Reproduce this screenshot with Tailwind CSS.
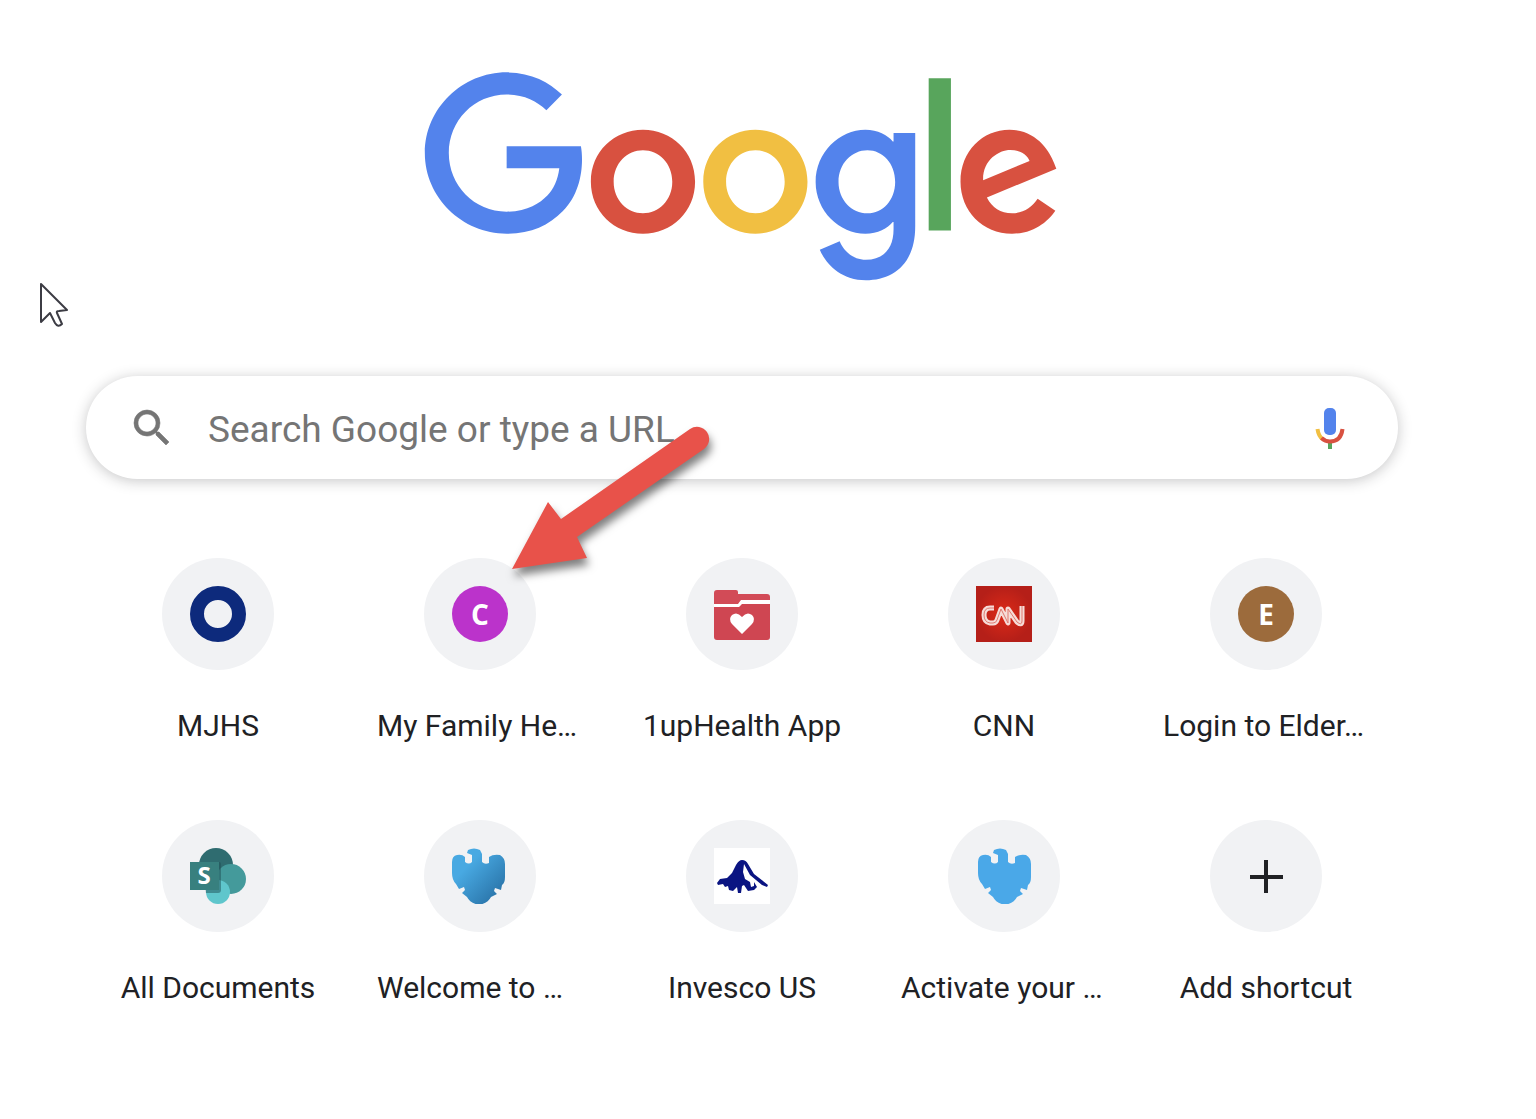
<!DOCTYPE html>
<html lang="en">
<head>
  <meta charset="UTF-8">
  <meta name="viewport" content="width=device-width, initial-scale=1.0">
  <title>New Tab</title>
  <script src="https://cdn.jsdelivr.net/npm/@tailwindcss/browser@4"></script>
</head>
<body class="relative min-h-screen bg-white font-[Roboto,sans-serif] text-[#202124]">

  <!-- Mouse pointer -->
  <svg class="absolute left-[38px] top-[280px] w-8 h-12" viewBox="0 0 32 48" fill="#fff" stroke="#3c3c44" stroke-width="2" stroke-linejoin="round" aria-hidden="true">
    <path d="M3 4v38l9-9 5 10q3 5 7 1l-5-11q-1-2 2-2l8-1z"/>
  </svg>

  <main class="flex flex-col items-center pt-[71px] pb-16 pr-[52px]">

    <h1>
      <svg class="w-[637px] h-[216px]" viewBox="0 0 272 92" role="img" aria-label="Google">
        <path fill="#d85140" d="M115.750 47.180c0 12.770-9.990 22.180-22.250 22.180s-22.250-9.410-22.250-22.180C71.250 34.320 81.240 25 93.500 25s22.250 9.320 22.250 22.180zm-9.740 0c0-7.980-5.790-13.440-12.510-13.440S80.990 39.200 80.990 47.180c0 7.900 5.790 13.440 12.510 13.440s12.510-5.550 12.510-13.440z"/>
        <path fill="#f1bf42" d="M163.750 47.180c0 12.770-9.990 22.180-22.250 22.180s-22.250-9.410-22.250-22.180c0-12.850 9.990-22.180 22.250-22.180s22.250 9.320 22.250 22.180zm-9.740 0c0-7.980-5.790-13.440-12.510-13.440s-12.510 5.460-12.510 13.440c0 7.900 5.790 13.440 12.510 13.440s12.510-5.550 12.510-13.440z"/>
        <path fill="#5383ec" d="M209.750 26.340v39.820c0 16.380-9.660 23.070-21.080 23.070-10.750 0-17.220-7.190-19.660-13.070l8.480-3.530c1.510 3.610 5.210 7.870 11.170 7.870 7.310 0 11.840-4.510 11.840-13v-3.190h-.34c-2.180 2.690-6.380 5.040-11.680 5.040-11.090 0-21.250-9.660-21.250-22.090 0-12.520 10.160-22.260 21.250-22.260 5.290 0 9.490 2.350 11.680 4.960h.34v-3.610h9.250zm-8.560 20.920c0-7.810-5.210-13.520-11.840-13.520-6.720 0-12.350 5.710-12.350 13.520 0 7.730 5.630 13.360 12.350 13.360 6.630 0 11.840-5.630 11.840-13.360z"/>
        <path fill="#58a55c" d="M225 3v65h-9.500V3h9.500z"/>
        <path fill="#d85140" d="M262.020 54.480l7.560 5.040c-2.440 3.610-8.320 9.830-18.480 9.830-12.600 0-22.010-9.740-22.010-22.180 0-13.190 9.490-22.180 20.920-22.180 11.510 0 17.140 9.160 18.980 14.110l1.010 2.520-29.650 12.280c2.270 4.450 5.800 6.720 10.750 6.720 4.960 0 8.400-2.440 10.920-6.140zm-23.270-7.980l19.820-8.230c-1.090-2.770-4.370-4.700-8.230-4.700-4.950 0-11.840 4.370-11.590 12.930z"/>
        <path fill="#5383ec" d="M35.290 41.410V32H67c.31 1.640.47 3.580.47 5.680 0 7.060-1.930 15.790-8.150 22.010-6.050 6.300-13.780 9.660-24.020 9.660C16.320 69.350.36 53.890.36 34.910.36 15.930 16.320.47 35.300.47c10.500 0 17.980 4.120 23.600 9.490l-6.640 6.640c-4.030-3.780-9.490-6.720-16.970-6.720-13.860 0-24.700 11.170-24.700 25.030 0 13.860 10.840 25.030 24.700 25.030 8.990 0 14.110-3.610 17.390-6.890 2.660-2.660 4.410-6.460 5.100-11.650l-22.490.01z"/>
      </svg>
    </h1>

    <!-- Search box -->
    <form class="relative mt-[89px] flex items-center gap-8 w-full max-w-[1312px] h-[103px] pl-[42px] pr-11 rounded-full bg-white shadow-[0_2px_14px_rgba(32,33,36,0.25)]">
      <label for="search" aria-label="Search" class="shrink-0">
        <svg class="w-12 h-12" viewBox="0 0 24 24" fill="#757575" stroke="#757575" stroke-width=".3" aria-hidden="true">
          <path d="M15.500 14h-.79l-.28-.27A6.470 6.470 0 0 0 16 9.500 6.500 6.500 0 1 0 9.500 16c1.610 0 3.090-.59 4.230-1.570l.27.28v.79l5 4.990L20.490 19l-4.990-5zm-6 0C7.010 14 5 11.990 5 9.500S7.010 5 9.500 5 14 7.010 14 9.500 11.990 14 9.500 14z"/>
        </svg>
      </label>
      <input id="search" type="text" placeholder="Search Google or type a URL" class="flex-1 min-w-0 h-full pt-1 text-[37px] outline-none placeholder:text-[#757575]">
      <button type="button" aria-label="Search by voice" class="shrink-0">
        <svg class="w-12 h-12" viewBox="0 0 48 48" fill="none" stroke-width="4" aria-hidden="true">
          <rect x="18" y="4" width="12" height="27" rx="5" fill="#5383ec"/>
          <path stroke="#58a55c" d="M24 38v7"/>
          <path stroke="#f1bf42" d="M11.500 25q1 7 5 10"/>
          <path stroke="#d85140" d="M15.500 34q3.500 3.500 8.500 3.500 11 0 12.500-12.500"/>
        </svg>
      </button>

      <!-- Callout arrow -->
      <svg class="absolute left-[414px] top-11 w-[220px] h-[170px] pointer-events-none drop-shadow-[2px_7px_4px_rgba(0,0,0,0.5)]" viewBox="0 0 220 170" fill="#e8524a" aria-hidden="true">
        <path d="M12 149 48 82l13 17L190 9a12 12 0 0 1 14 20L77 117l10 21z"/>
      </svg>
    </form>

    <!-- Shortcuts -->
    <nav class="mt-[79px] grid grid-cols-5 gap-y-[76px] w-full max-w-[1310px] text-[30px] leading-9">

      <a href="#" class="flex flex-col items-center gap-[38px]">
        <span class="flex items-center justify-center size-28 rounded-full bg-[#f1f2f4]">
          <svg class="size-14" viewBox="0 0 56 56" aria-hidden="true"><circle cx="28" cy="28" r="21" fill="none" stroke="#0d2a7c" stroke-width="14"/></svg>
        </span>
        <span class="w-[206px] truncate text-center">MJHS</span>
      </a>

      <a href="#" class="flex flex-col items-center gap-[38px]">
        <span class="flex items-center justify-center size-28 rounded-full bg-[#f1f2f4]">
          <span class="flex items-center justify-center size-14 rounded-full bg-[#bb33cb] font-['Open_Sans',sans-serif] text-[28px] font-bold text-white">C</span>
        </span>
        <span class="w-[206px] truncate">My Family He…</span>
      </a>

      <a href="#" class="flex flex-col items-center gap-[38px]">
        <span class="flex items-center justify-center size-28 rounded-full bg-[#f1f2f4]">
          <svg class="size-14" viewBox="0 0 56 56" aria-hidden="true">
            <path fill="#d24b57" d="M3 4h19q2 0 2 2v2h29q3 0 3 3v4H27l-3 4H0V7q0-3 3-3z"/>
            <path fill="#fff" d="M0 18h24l3-4h29v4H28l-3 4H0z"/>
            <path fill="#cf4652" d="M0 21h25l3-3h28v33q0 3-3 3H3q-3 0-3-3z"/>
            <path fill="#fff" d="M28 48 18 38q-4-5 0-9 5-4 10 2 5-6 10-2 4 4 0 9z"/>
          </svg>
        </span>
        <span class="w-[206px] truncate text-center">1upHealth App</span>
      </a>

      <a href="#" class="flex flex-col items-center gap-[38px]">
        <span class="flex items-center justify-center size-28 rounded-full bg-[#f1f2f4]">
          <svg class="size-14" viewBox="0 0 56 56" fill="none" stroke-linejoin="round" aria-hidden="true">
            <defs>
              <radialGradient id="cnn-red"><stop offset="0" stop-color="#dc2a18"/><stop offset="1" stop-color="#b51f18"/></radialGradient>
              <path id="cnn-mark" d="M18 22h-4q-6 0-6 7t6 8h3q3 0 4-3l4-11 7 14V23l9 13q5 4 5-1V20"/>
            </defs>
            <path fill="url(#cnn-red)" d="M0 0h56v56H0z"/>
            <use href="#cnn-mark" stroke="#f6dcd8" stroke-width="5"/>
            <use href="#cnn-mark" stroke="#e07a70" stroke-width="1"/>
          </svg>
        </span>
        <span class="w-[206px] truncate text-center">CNN</span>
      </a>

      <a href="#" class="flex flex-col items-center gap-[38px]">
        <span class="flex items-center justify-center size-28 rounded-full bg-[#f1f2f4]">
          <span class="flex items-center justify-center size-14 rounded-full bg-[#9c6b3c] font-['Open_Sans',sans-serif] text-[28px] font-bold text-white">E</span>
        </span>
        <span class="w-[206px] truncate">Login to Elder…</span>
      </a>

      <a href="#" class="flex flex-col items-center gap-[38px]">
        <span class="flex items-center justify-center size-28 rounded-full bg-[#f1f2f4]">
          <svg class="size-14" viewBox="0 0 56 56" aria-hidden="true">
            <circle cx="26" cy="17" r="17" fill="#2f6c70"/>
            <circle cx="41" cy="31" r="15" fill="#449a9b"/>
            <circle cx="28" cy="44" r="12" fill="#5fc6cc"/>
            <path fill="#1f4f55" fill-opacity=".5" d="M12 14h17q2 0 2 2v26q0 3-3 3H16z"/>
            <path fill="#38807f" d="M0 14h29v28H0z"/>
            <text x="14" y="36" text-anchor="middle" font-family="Open Sans, sans-serif" font-size="24" font-weight="700" fill="#fff">S</text>
          </svg>
        </span>
        <span class="w-[206px] truncate text-center">All Documents</span>
      </a>

      <a href="#" class="flex flex-col items-center gap-[38px]">
        <span class="flex items-center justify-center size-28 rounded-full bg-[#f1f2f4]">
          <svg class="size-14" viewBox="0 0 56 56" aria-hidden="true">
            <defs>
              <linearGradient id="eagle-shade" x2="1" y2="1"><stop offset=".3" stop-color="#48a9e2"/><stop offset="1" stop-color="#23689c"/></linearGradient>
              <path id="eagle" d="M16 2q6-3 12 0l2 4v8q3 3 7 1V9q4-3 11-2 5 3 5 9v13q0 6-3 8l-1 5-6-2-1 3 3 3-6 3q-3 6-12 8-9-2-12-8l-5-4 3-3-1-3-5 2-3-5q-4-4-4-11V14q0-6 5-7 5-1 8 2v5q4 3 7 0V7l-5-2z"/>
            </defs>
            <use href="#eagle" fill="url(#eagle-shade)"/>
          </svg>
        </span>
        <span class="w-[206px] truncate">Welcome to …</span>
      </a>

      <a href="#" class="flex flex-col items-center gap-[38px]">
        <span class="flex items-center justify-center size-28 rounded-full bg-[#f1f2f4]">
          <svg class="size-14 bg-white" viewBox="0 0 56 56" aria-hidden="true">
            <path fill="#0a1482" d="M28 12q4 0 6 4l6 10 14 11-1 2-5-2-12-10-6-11-1 8 2 7 5 3 1 5 3-1v-4l3 5-3 3-6 1-4-6-2 1-1 7h-3l-1-6-4 4-4-1-1-4-3 1-2-3-5 1-1-2 3-4 7-1 5-5 4-8q3-5 6-5z"/>
          </svg>
        </span>
        <span class="w-[206px] truncate text-center">Invesco US</span>
      </a>

      <a href="#" class="flex flex-col items-center gap-[38px]">
        <span class="flex items-center justify-center size-28 rounded-full bg-[#f1f2f4]">
          <svg class="size-14" viewBox="0 0 56 56" aria-hidden="true"><use href="#eagle" x="2" fill="#4aa8e8"/></svg>
        </span>
        <span class="w-[206px] truncate">Activate your …</span>
      </a>

      <button type="button" class="flex flex-col items-center gap-[38px]">
        <span class="flex items-center justify-center size-28 rounded-full bg-[#f1f2f4]">
          <svg class="size-14" viewBox="0 0 56 56" stroke="#202124" stroke-width="4" aria-hidden="true"><path d="M28 12v33M12 29h33"/></svg>
        </span>
        <span class="w-[206px] truncate text-center">Add shortcut</span>
      </button>

    </nav>
  </main>

</body>
</html>
